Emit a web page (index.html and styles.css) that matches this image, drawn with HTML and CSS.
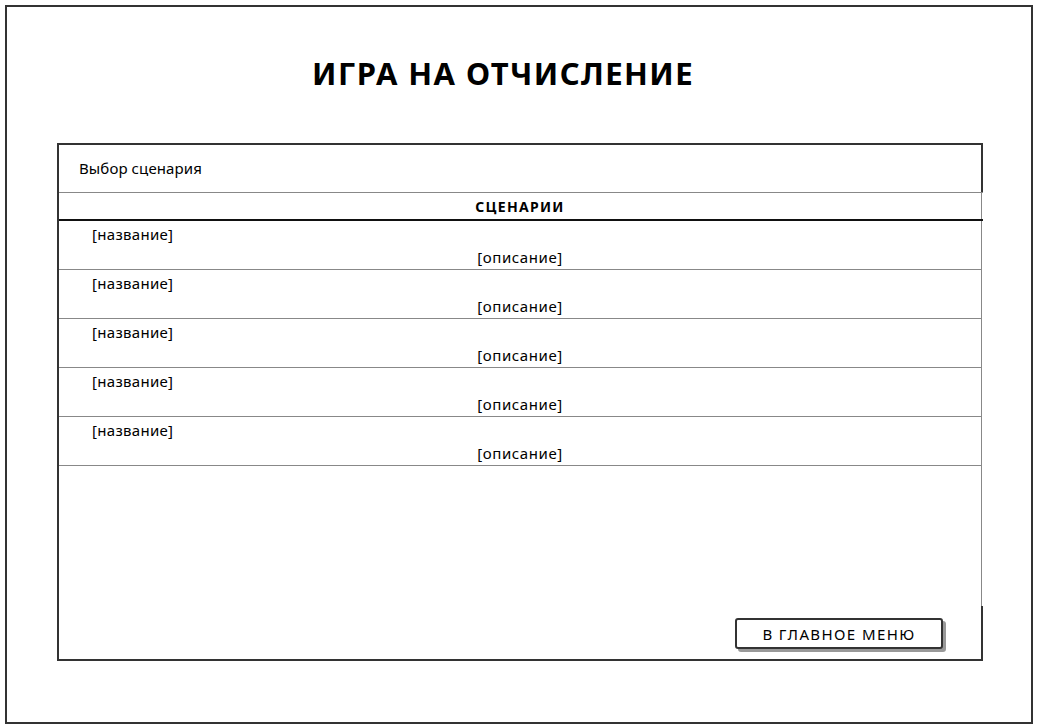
FILE: index.html
```html
<!DOCTYPE html>
<html lang="ru">
<head>
<meta charset="utf-8">
<title>Игра на отчисление</title>
<link rel="stylesheet" href="styles.css">
</head>
<body>
<div class="frame">
  <h1 class="title">ИГРА НА ОТЧИСЛЕНИЕ</h1>
  <div class="panel">
    <div class="panel-head">Выбор сценария</div>
    <div class="table">
      <div class="thead">СЦЕНАРИИ</div>
      <div class="row"><div class="name">[название]</div><div class="desc">[описание]</div></div>
      <div class="row"><div class="name">[название]</div><div class="desc">[описание]</div></div>
      <div class="row"><div class="name">[название]</div><div class="desc">[описание]</div></div>
      <div class="row"><div class="name">[название]</div><div class="desc">[описание]</div></div>
      <div class="row"><div class="name">[название]</div><div class="desc">[описание]</div></div>
    </div>
    <div class="actions">
      <button class="btn">В ГЛАВНОЕ МЕНЮ</button>
    </div>
  </div>
</div>
</body>
</html>
```

FILE: styles.css
```css
* { box-sizing: border-box; }
html, body { margin: 0; padding: 0; background: #fff; }
body {
  font-family: "Noto Sans", "DejaVu Sans", sans-serif;
  color: #000;
}
.frame {
  margin: 5px 0 0 5px;
  width: 1028px;
  height: 719px;
  border: 2px solid #333;
  display: flex;
  flex-direction: column;
}
.title {
  margin: 46px 0 0 0;
  height: 40px;
  line-height: 40px;
  font-size: 31px;
  font-weight: 700;
  text-align: center;
  padding-right: 32px;
  letter-spacing: 1.4px;
}
.panel {
  margin: 50px 0 0 50px;
  width: 926px;
  height: 518px;
  border: 2px solid #333;
  display: flex;
  flex-direction: column;
}
.panel-head {
  height: 47px;
  padding-left: 20px;
  line-height: 46px;
  font-size: 15px;
  letter-spacing: 0.1px;
}
.table {
  height: 414px;
  margin-right: -2px;
  border-top: 1px solid #888;
  background: linear-gradient(to left, #fff 0 1px, #888 1px 2px, #fff 2px);
  display: flex;
  flex-direction: column;
}
.thead {
  height: 28px;
  border-bottom: 2px solid #111;
  text-align: center;
  font-weight: 700;
  font-size: 14px;
  line-height: 27px;
  padding-right: 2px;
  letter-spacing: 1.3px;
}
.row {
  height: 49px;
  border-bottom: 1px solid #888;
  margin-right: 2px;
  font-size: 15px;
  letter-spacing: 0.3px;
}
.name {
  padding: 3px 0 0 33px;
  line-height: 20px;
}
.desc {
  text-align: center;
  line-height: 20px;
  margin-top: 3px;
  letter-spacing: 0.6px;
}
.actions {
  display: flex;
  justify-content: flex-end;
  padding: 12px 38px 0 0;
}
.btn {
  width: 208px;
  height: 31px;
  border: 2px solid #333;
  border-radius: 3px;
  background: #fff;
  box-shadow: 3px 3px 0 #999;
  font-family: "Noto Sans", "DejaVu Sans", sans-serif;
  font-size: 15px;
  letter-spacing: 1.4px;
  color: #000;
  padding: 0;
}
```
